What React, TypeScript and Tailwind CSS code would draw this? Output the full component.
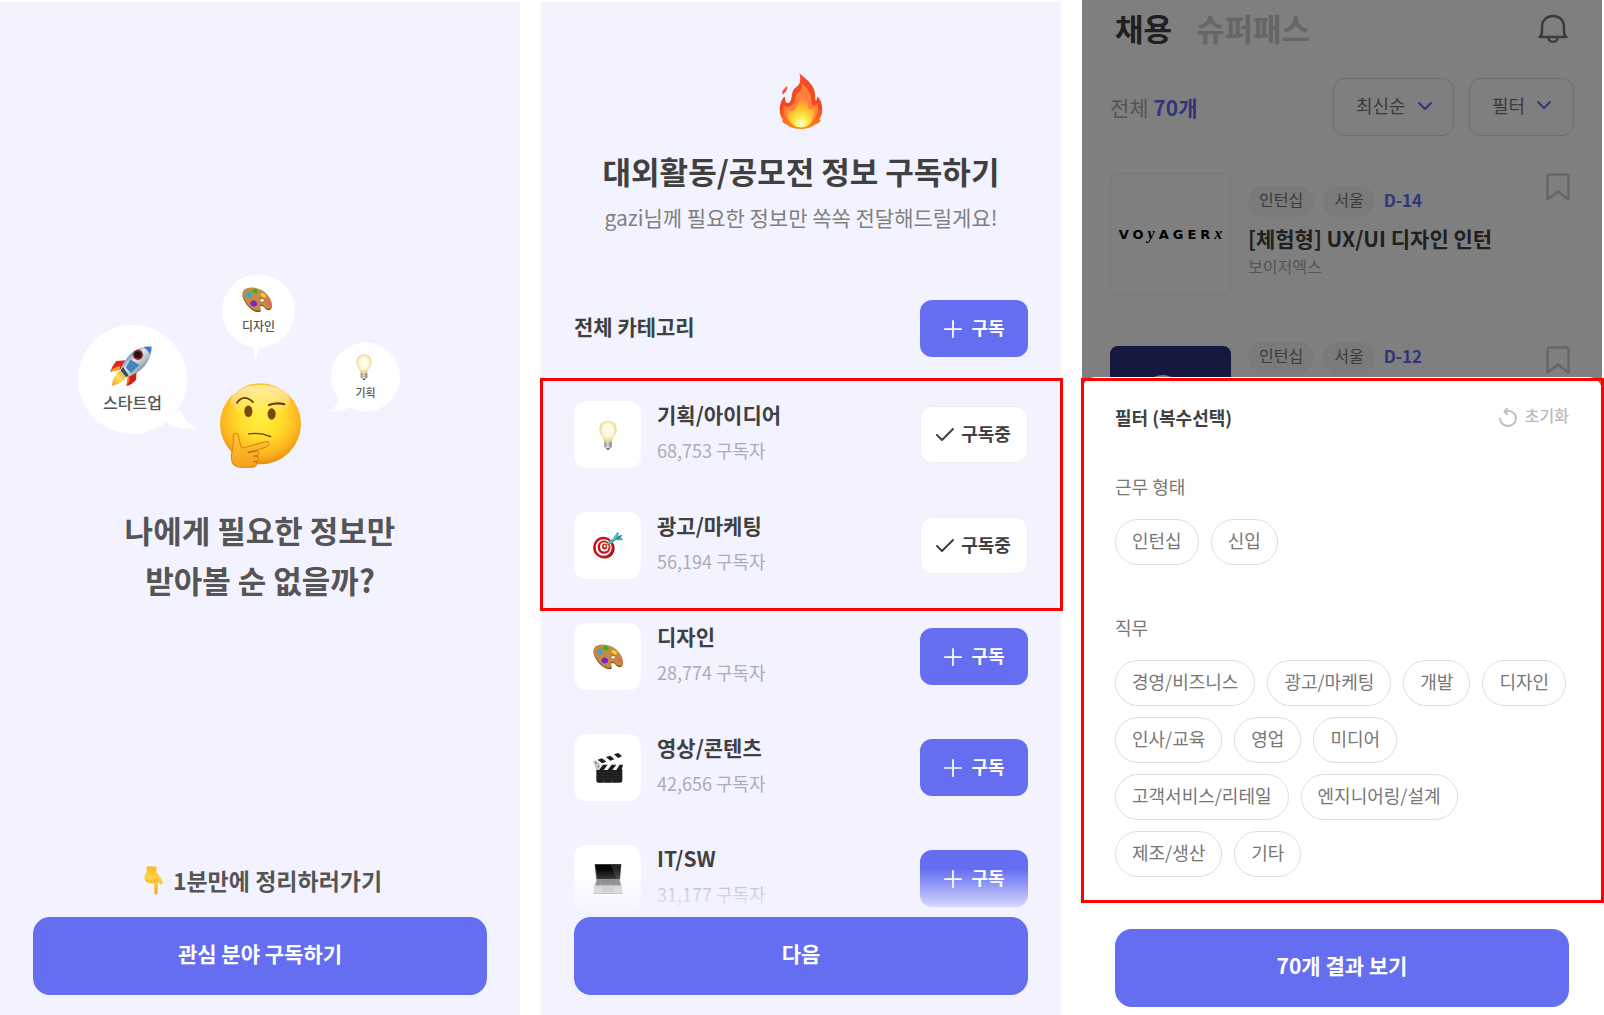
import React from 'react';
import { Check, ChevronDown, Plus } from 'lucide-react';

interface IconProps {
  className?: string;
}

function ThinkingFace({ className }: IconProps) {
  return (
    <svg viewBox="0 0 240 252" className={className} aria-hidden="true">
      <defs>
        <radialGradient id="face" cx="0.5" cy="0.4" r="0.62">
          <stop offset="0" stopColor="#fff23f" />
          <stop offset="0.45" stopColor="#ffdc2c" />
          <stop offset="0.78" stopColor="#fdb41f" />
          <stop offset="1" stopColor="#e38b10" />
        </radialGradient>
        <linearGradient id="faceShine" x1="0" y1="0" x2="0" y2="1">
          <stop offset="0" stopColor="#fff" stopOpacity="0.6" />
          <stop offset="1" stopColor="#fff" stopOpacity="0" />
        </linearGradient>
        <linearGradient id="hand" x1="0" y1="0" x2="0" y2="1">
          <stop offset="0" stopColor="#ffc92f" />
          <stop offset="1" stopColor="#f6a01c" />
        </linearGradient>
      </defs>
      <circle cx="120" cy="121" r="120" fill="url(#face)" />
      <ellipse cx="120" cy="52" rx="88" ry="46" fill="url(#faceShine)" />
      <g fill="none" stroke="#6b3a05" strokeLinecap="round">
        <path d="M50 59Q70 30 98 57" strokeWidth="5" />
        <path d="M145 65Q168 57 191 63" strokeWidth="6" />
        <path d="M85 151Q118 145 150 159" strokeWidth="4" />
      </g>
      <ellipse cx="84" cy="84" rx="12" ry="17" fill="#7a450e" />
      <ellipse cx="153" cy="92" rx="12" ry="17" fill="#7a450e" />
      <path
        d="M39 156C40 147 52 146 55 158L60 182C61 190 66 194 74 191L134 174C147 172 149 184 139 188L108 200C116 204 116 212 110 216C116 222 114 230 109 233C112 242 104 250 92 250H62C40 250 32 236 34 214C36 196 42 186 39 156Z"
        fill="url(#hand)"
        stroke="#d9820f"
        strokeWidth="3"
      />
      <path d="M108 200L84 206M110 216L100 217M109 233L100 233" stroke="#b9660a" strokeWidth="4" strokeLinecap="round" />
    </svg>
  );
}

function Rocket({ className }: IconProps) {
  return (
    <svg viewBox="0 0 123 118" className={className} aria-hidden="true">
      <defs>
        <linearGradient id="hull" x1="0.2" y1="0.2" x2="0.8" y2="0.8">
          <stop offset="0" stopColor="#3f6f9f" />
          <stop offset="0.4" stopColor="#dfe6ea" />
          <stop offset="0.7" stopColor="#aebcc4" />
          <stop offset="1" stopColor="#3a6a9c" />
        </linearGradient>
        <linearGradient id="flame" x1="1" y1="0" x2="0" y2="1">
          <stop offset="0" stopColor="#e98b14" />
          <stop offset="0.5" stopColor="#ffe562" />
          <stop offset="1" stopColor="#f29b1d" />
        </linearGradient>
      </defs>
      <path d="M46 42L18 44Q6 58 0 76L30 70Z" fill="#e0281e" />
      <path d="M0 76Q10 62 30 60L28 71Z" fill="#f7a21d" />
      <path d="M78 76L76 100Q64 114 48 118L54 86Z" fill="#d91c16" />
      <path d="M48 118Q58 106 58 94L52 88Z" fill="#f7781d" />
      <path d="M30 72Q8 86 5 117Q34 112 48 92Z" fill="url(#flame)" />
      <path d="M122 2Q92-2 64 20Q40 42 31 72L48 92Q80 84 102 58Q124 30 122 2Z" fill="url(#hull)" />
      <path d="M122 2Q112 0 98 3Q112 12 118 24Q123 12 122 2Z" fill="#3a7cc4" />
      <path d="M60 40L86 56L62 80L46 64Z" fill="#4285c0" />
      <path d="M31 72L48 92L54 86L38 62Z" fill="#33475a" />
      <circle cx="82" cy="26" r="15" fill="#9c1f22" />
      <circle cx="82" cy="26" r="10" fill="#1c1517" />
    </svg>
  );
}

function Palette({ className }: IconProps) {
  return (
    <svg viewBox="0 0 88 73" className={className} aria-hidden="true">
      <path
        d="M3 16C10 4 36 0 60 14C78 24 90 44 87 60C84 70 76 70 68 63C62 54 54 54 53 60C53 64 58 70 52 73C40 77 20 62 10 46C2 34 0 24 3 16Z"
        fill="#7c4a17"
      />
      <path
        d="M3 12C10 0 36-3 60 10C78 21 90 41 87 56C84 66 76 66 68 60C62 50 54 50 52 56C52 61 57 66 52 69C40 73 20 58 10 42C2 30 0 20 3 12Z"
        fill="#c58a45"
      />
      <ellipse cx="59" cy="39" rx="7" ry="5" fill="#fff" stroke="#7c4a17" strokeWidth="1.5" />
      <path d="M12 18Q18 10 24 18Q32 22 27 29Q20 33 15 27Q10 24 12 18Z" fill="#2fa8dd" />
      <path d="M30 9Q37 2 43 8Q50 13 44 18Q36 21 31 16Z" fill="#37b526" />
      <path d="M55 18Q63 15 68 22Q73 28 67 31Q58 29 55 23Z" fill="#f6cf2b" />
      <path d="M71 38Q79 38 83 46Q86 54 81 54Q73 50 71 44Z" fill="#f0605b" />
      <path d="M26 43Q34 37 41 42Q48 50 42 55Q34 60 27 54Q22 50 26 43Z" fill="#7d22c3" />
    </svg>
  );
}

function Bulb({ className }: IconProps) {
  return (
    <svg viewBox="0 0 48 78" className={className} aria-hidden="true">
      <defs>
        <radialGradient id="glass" cx="0.5" cy="0.45" r="0.58">
          <stop offset="0" stopColor="#fff" />
          <stop offset="0.55" stopColor="#fff6d6" />
          <stop offset="1" stopColor="#e3c368" />
        </radialGradient>
        <linearGradient id="socket" x1="0" y1="0" x2="1" y2="0">
          <stop offset="0" stopColor="#8b8b8b" />
          <stop offset="0.45" stopColor="#ededed" />
          <stop offset="1" stopColor="#7c7c7c" />
        </linearGradient>
      </defs>
      <path d="M24 1C10 1 1 11 1 24C1 38 13 44 14 58H34C35 44 47 38 47 24C47 11 38 1 24 1Z" fill="url(#glass)" />
      <path d="M14 57H34V70Q32 74 28 75H20Q16 74 14 70Z" fill="url(#socket)" />
      <path d="M14 62H34M14 67H34" stroke="#8f8f8f" strokeWidth="1.5" />
      <path d="M19 74H29L26 78H22Z" fill="#3d3d3d" />
    </svg>
  );
}

function PointDown({ className }: IconProps) {
  return (
    <svg viewBox="0 0 55 85" className={className} aria-hidden="true">
      <defs>
        <linearGradient id="finger" x1="0" y1="0" x2="0" y2="1">
          <stop offset="0" stopColor="#f9b62c" />
          <stop offset="0.4" stopColor="#ffd443" />
          <stop offset="1" stopColor="#f5a920" />
        </linearGradient>
      </defs>
      <path
        d="M6 3Q20-2 37 3Q34 14 39 22Q50 32 55 50Q53 57 45 52L40 46V80Q35 88 30 80V50Q24 54 20 50Q13 54 10 47Q3 48 2 40Q-1 28 7 18Q8 10 6 3Z"
        fill="url(#finger)"
      />
      <path d="M30 50V38M20 50V42M10 46V39M40 46Q39 38 34 34" stroke="#d98b14" strokeWidth="1.5" fill="none" />
    </svg>
  );
}

function Fire({ className }: IconProps) {
  return (
    <svg viewBox="0 0 126 166" className={className} aria-hidden="true">
      <defs>
        <linearGradient id="fireOuter" x1="0" y1="0" x2="0" y2="1">
          <stop offset="0" stopColor="#f4502c" />
          <stop offset="0.6" stopColor="#f2461f" />
          <stop offset="1" stopColor="#f98a1e" />
        </linearGradient>
        <radialGradient id="fireInner" cx="0.5" cy="0.88" r="0.75">
          <stop offset="0" stopColor="#fffde0" />
          <stop offset="0.25" stopColor="#fff25a" />
          <stop offset="0.6" stopColor="#ffc32c" />
          <stop offset="1" stopColor="#ff8a33" />
        </radialGradient>
      </defs>
      <path
        d="M58 0C70 14 104 30 105 66C105 82 106 84 109 80C111 76 109 71 112 70C121 78 126 92 126 110C126 124 120 134 116 139L122 138C120 148 112 150 106 152C96 161 80 166 63 166C44 166 28 161 18 151C12 150 8 146 6 140L11 141C4 132 0 124 0 108C0 92 8 74 14 70C18 76 14 90 24 89C36 87 34 70 38 56C42 42 56 42 60 26C62 16 60 8 58 0Z"
        fill="url(#fireOuter)"
      />
      <path
        d="M66 32C86 50 96 62 94 88C94 100 108 98 112 88C118 112 108 136 94 150C84 160 44 160 32 150C16 138 8 116 12 94C18 104 34 102 42 88C48 76 44 68 52 60C62 52 68 48 66 32Z"
        fill="#ff7e3a"
      />
      <path
        d="M66 66C78 80 84 86 84 100C86 112 98 108 104 102C106 124 98 142 86 154C76 164 50 164 40 154C26 144 20 128 24 110C32 116 44 114 48 102C52 90 62 84 66 66Z"
        fill="url(#fireInner)"
      />
      <path d="M8 64C4 50 18 46 21 38C25 48 18 58 8 64Z" fill="#f0533a" />
    </svg>
  );
}

function Target({ className }: IconProps) {
  return (
    <svg viewBox="0 0 90 80" className={className} aria-hidden="true">
      <ellipse cx="36" cy="49" rx="29" ry="30" fill="#7d0d10" />
      <ellipse cx="31" cy="46" rx="31" ry="32" fill="#c9151b" />
      <ellipse cx="32" cy="46" rx="24" ry="25" fill="#fff" />
      <ellipse cx="33" cy="45" rx="19" ry="20" fill="#c9151b" />
      <ellipse cx="34" cy="44" rx="13" ry="14" fill="#fff" />
      <ellipse cx="35" cy="43" rx="8" ry="9" fill="#c9151b" />
      <ellipse cx="36" cy="42" rx="4" ry="4" fill="#fff" />
      <path d="M36 42L46 33" stroke="#a8862a" strokeWidth="4" />
      <path d="M44 32L66 14L72 21L50 38Z" fill="#39a9b5" />
      <path d="M46 34L68 17" stroke="#9adfe4" strokeWidth="2" />
      <path d="M62 16L72 0L78 2L76 12L88 18L90 24L72 24Z" fill="#4ab7c3" />
      <path d="M68 19L84 8L88 11L74 22Z" fill="#267f8c" />
    </svg>
  );
}

function Clapper({ className }: IconProps) {
  return (
    <svg viewBox="0 0 90 93" className={className} aria-hidden="true">
      <path d="M10 52H88V86Q88 92 80 92H16Q10 92 10 86Z" fill="#1d1d1d" />
      <path d="M12 62H86M12 71H86M12 80H86" stroke="#444" strokeWidth="1" />
      <path d="M32 84V90M58 84V90" stroke="#777" strokeWidth="2" />
      <path d="M10 38H90L86 54H10Z" fill="#f4f4f4" />
      <path d="M30 38H44L32 54H18ZM56 38H70L58 54H44ZM80 38H90L86 54H70Z" fill="#1d1d1d" />
      <path d="M0 28L83 1L87 14L6 41Z" fill="#f4f4f4" />
      <path d="M14 23L27 19L40 29L27 34ZM39 15L52 11L64 22L52 26ZM63 7L76 3L87 13L75 18Z" fill="#1d1d1d" />
      <path d="M0 28L10 25L22 38L18 54H10Z" fill="#c5c8ca" />
      <circle cx="9" cy="33" r="2" fill="#333" />
      <circle cx="16" cy="44" r="2" fill="#333" />
    </svg>
  );
}

function Laptop({ className }: IconProps) {
  return (
    <svg viewBox="0 0 88 90" className={className} aria-hidden="true">
      <path d="M4 0H84L80 47H9Z" fill="#3c3c3c" />
      <path d="M7 3H81L77 44H12Z" fill="#050505" />
      <path d="M52 3H81L77 44H70Z" fill="#262626" />
      <path d="M9 47H80L86 68H2Z" fill="#a2a2a5" />
      <path d="M12 49H77L81 63H8Z" fill="#5d5d60" />
      <path d="M11 54H79M9 59H80M24 49L20 63M38 49L36 63M52 49L53 63M66 49L70 63" stroke="#9a9a9d" strokeWidth="1" />
      <path d="M2 68H86L88 86Q88 90 84 90H4Q0 90 0 86Z" fill="#c8c8cc" />
      <path d="M26 68H63L65 84H23Z" fill="#b5b5ba" />
      <path d="M0 86H88Q88 90 84 90H4Q0 90 0 86Z" fill="#98989c" />
    </svg>
  );
}

function Bell({ className }: IconProps) {
  return (
    <svg
      viewBox="0 0 30 30"
      fill="none"
      stroke="currentColor"
      strokeWidth="2.5"
      strokeLinejoin="round"
      strokeLinecap="round"
      className={className}
      aria-hidden="true"
    >
      <path d="M1.500 23H28.500C25.500 21.500 26 18.500 26 13C26 6 21 2 15 2C9 2 4 6 4 13C4 18.500 4.500 21.500 1.500 23Z" />
      <path d="M10.500 24C11 29 19 29 19.500 24" />
    </svg>
  );
}

function BookmarkIcon({ className }: IconProps) {
  return (
    <svg viewBox="0 0 24 28" fill="none" stroke="currentColor" strokeWidth="2.5" strokeLinejoin="round" className={className} aria-hidden="true">
      <path d="M1.500 4Q1.500 1.500 4 1.500H20Q22.500 1.500 22.500 4V26.500L12 18.500L1.500 26.500Z" />
    </svg>
  );
}

function ResetIcon({ className }: IconProps) {
  return (
    <svg viewBox="0 0 18 19" fill="none" stroke="currentColor" strokeWidth="1.8" strokeLinecap="round" className={className} aria-hidden="true">
      <path d="M6 3.500C11.500 1.500 17 5 17 10.300C17 14.500 13.500 18 9 18C4.500 18 1 14.500 1 10.500" />
      <path d="M8 1L5.500 3.500L8 6" />
    </svg>
  );
}

const categories = [
  { name: '기획/아이디어', subscribers: '68,753', icon: Bulb, iconClass: 'h-[30px] w-[18px]', subscribed: true },
  { name: '광고/마케팅', subscribers: '56,194', icon: Target, iconClass: 'h-[27px] w-[30px]', subscribed: true },
  { name: '디자인', subscribers: '28,774', icon: Palette, iconClass: 'h-[25px] w-[30px]', subscribed: false },
  { name: '영상/콘텐츠', subscribers: '42,656', icon: Clapper, iconClass: 'h-[31px] w-[30px]', subscribed: false },
  { name: 'IT/SW', subscribers: '31,177', icon: Laptop, iconClass: 'h-[30px] w-[30px]', subscribed: false },
];

const workTypes = ['인턴십', '신입'];

const jobs = [
  '경영/비즈니스',
  '광고/마케팅',
  '개발',
  '디자인',
  '인사/교육',
  '영업',
  '미디어',
  '고객서비스/리테일',
  '엔지니어링/설계',
  '제조/생산',
  '기타',
];

function PrimaryButton({ children }: { children: React.ReactNode }) {
  return (
    <button type="button" className="h-[78px] w-full rounded-[17px] bg-[#656df1] pb-1 text-[21px] font-bold text-white">
      {children}
    </button>
  );
}

function SubscribeButton({ subscribed = false }: { subscribed?: boolean }) {
  if (subscribed) {
    return (
      <button
        type="button"
        className="flex h-[57px] w-[108px] items-center justify-center gap-1 rounded-xl border border-[#eeeef4] bg-white pr-1 text-[18px] leading-6 font-bold text-[#404040]"
      >
        <Check className="h-6 w-6" strokeWidth={2} />
        <span className="pb-1">구독중</span>
      </button>
    );
  }
  return (
    <button
      type="button"
      className="flex h-[57px] w-[108px] items-center justify-center gap-1 rounded-xl bg-[#656df1] pr-1 text-[18px] leading-6 font-bold text-white"
    >
      <Plus className="h-7 w-7" strokeWidth={1.5} />
      <span className="pb-1">구독</span>
    </button>
  );
}

function CategoryRow({ category }: { category: (typeof categories)[number] }) {
  const Icon = category.icon;
  return (
    <li className="flex h-[67px] items-center">
      <div className="flex h-[67px] w-[67px] items-center justify-center rounded-xl bg-white">
        <Icon className={category.iconClass} />
      </div>
      <div className="ml-4 flex-1 self-start">
        <p className="text-[21px] leading-[26px] font-bold text-[#404040]">{category.name}</p>
        <p className="mt-[11px] text-[18px] leading-6 text-[#acacb2]">{category.subscribers} 구독자</p>
      </div>
      <SubscribeButton subscribed={category.subscribed} />
    </li>
  );
}

function IntroScreen() {
  return (
    <section className="mt-0.5 flex flex-col bg-[#f3f3ff] pt-[258px] pb-5">
      <div className="rounded-[20px] border border-[#f2f2f6] pt-[13px]">
        {/* Thought bubbles around the face */}
        <div className="relative mx-auto h-[194px] w-[364px]">
          <svg viewBox="0 0 364 194" className="absolute inset-0 h-full w-full" fill="#fff" aria-hidden="true">
            <circle cx="54.500" cy="105.500" r="54.500" />
            <path d="M102 136Q107 150 119 154Q101 158 88 148Z" />
            <circle cx="180.500" cy="37" r="36.500" />
            <path d="M174 70L177.500 87L183 70Z" />
            <circle cx="287.500" cy="103" r="34.500" />
            <path d="M261 122Q260 131 253 137Q263 139 273 132Z" />
          </svg>
          <div className="absolute top-[72px] left-0 flex w-[109px] flex-col items-center">
            <Rocket className="mr-1 h-[40px] w-[42px]" />
            <span className="mt-1 text-[16px] leading-6 font-medium text-[#555]">스타트업</span>
          </div>
          <div className="absolute top-[13px] left-[144px] flex w-[73px] flex-col items-center">
            <Palette className="mr-1 h-[25px] w-[30px]" />
            <span className="mt-1 text-[12px] leading-5 font-medium text-[#555]">디자인</span>
          </div>
          <div className="absolute top-[80px] left-[253px] flex w-[69px] flex-col items-center">
            <Bulb className="mr-1 h-[26px] w-4" />
            <span className="mt-0.5 text-[11px] leading-5 font-medium text-[#555]">기획</span>
          </div>
          <ThinkingFace className="absolute top-[109px] left-[142px] h-[85px] w-[81px]" />
        </div>
        <h1 className="mt-[37px] text-center text-[31px] leading-[50px] font-bold text-[#555]">
          나에게 필요한 정보만
          <br />
          받아볼 순 없을까?
        </h1>
      </div>
      <div className="mt-auto px-[33px]">
        <p className="mb-[21px] flex items-center justify-center gap-2.5 pl-1.5 text-[23px] leading-8 font-bold text-[#555]">
          <PointDown className="h-[29px] w-[19px]" />
          1분만에 정리하러가기
        </p>
        <PrimaryButton>관심 분야 구독하기</PrimaryButton>
      </div>
    </section>
  );
}

function SubscribeScreen() {
  return (
    <section className="mt-0.5 flex flex-col bg-[#f3f3ff] pt-[71px] pb-5">
      <header className="flex flex-col items-center">
        <Fire className="h-[56px] w-[44px]" />
        <h1 className="mt-5 text-[31px] leading-[44px] font-bold text-[#404040]">대외활동/공모전 정보 구독하기</h1>
        <p className="mt-2 text-[21px] leading-8 text-[#808080]">gazi님께 필요한 정보만 쏙쏙 전달해드릴게요!</p>
      </header>
      <div className="mt-[67px] flex items-center justify-between px-[33px]">
        <h2 className="pb-1.5 text-[21px] leading-8 font-bold text-[#404040]">전체 카테고리</h2>
        <SubscribeButton />
      </div>
      <div className="relative mt-[21px] px-[33px] pt-[23px] pb-8">
        <ul className="flex flex-col gap-11">
          {categories.slice(0, 2).map((category) => (
            <CategoryRow key={category.name} category={category} />
          ))}
        </ul>
        <div className="pointer-events-none absolute inset-y-0 -right-0.5 -left-px border-[3px] border-[#ff0000]" />
      </div>
      <ul className="mt-3 flex flex-col gap-11 px-[33px]">
        {categories.slice(2).map((category) => (
          <CategoryRow key={category.name} category={category} />
        ))}
      </ul>
      <div className="relative mt-auto px-[33px]">
        <div className="pointer-events-none absolute inset-x-0 bottom-full h-12 bg-linear-to-t from-[#f3f3ff] to-[#f3f3ff]/0" />
        <PrimaryButton>다음</PrimaryButton>
      </div>
    </section>
  );
}

function JobTags({ dday }: { dday: string }) {
  return (
    <div className="flex items-center gap-[9px] text-[16px] leading-[27px]">
      <span className="rounded-full bg-[#f4f4f4] px-[11px] pb-1 text-[#777]">인턴십</span>
      <span className="rounded-full bg-[#f4f4f4] px-[11px] pb-1 text-[#777]">서울</span>
      <span className="pb-1 text-[17px] font-bold text-[#656df1]">{dday}</span>
    </div>
  );
}

function FilterChips({ title, options }: { title: string; options: string[] }) {
  return (
    <div>
      <h3 className="pb-0.5 text-[18px] leading-6 text-[#777]">{title}</h3>
      <div className="mt-[19px] flex flex-wrap gap-x-3 gap-y-[11px]">
        {options.map((option) => (
          <button
            key={option}
            type="button"
            className="h-[46px] rounded-full border border-[#dedede] px-4 pb-1 text-[18px] leading-6 text-[#777]"
          >
            {option}
          </button>
        ))}
      </div>
    </div>
  );
}

function FilterScreen() {
  return (
    <section className="flex flex-col bg-[#808080]">
      {/* Job list behind the sheet */}
      <div className="relative h-[377px] overflow-hidden bg-white">
        <div className="flex h-[58px] items-center pr-[34px] pl-[33px]">
          <nav className="flex gap-6 pb-0.5 text-[31px] leading-[44px] font-bold">
            <button type="button" className="text-[#404040]">채용</button>
            <button type="button" className="text-[#ccc]">슈퍼패스</button>
          </nav>
          <button type="button" aria-label="알림" className="ml-auto text-[#777]">
            <Bell className="h-[30px] w-[30px]" />
          </button>
        </div>

        <div className="mt-5 flex items-center pr-7 pl-7">
          <p className="flex-1 text-[21px] leading-8 text-[#aaa]">
            전체 <span className="font-bold text-[#656df1]">70개</span>
          </p>
          <div className="relative">
            <select
              aria-label="정렬"
              className="h-[58px] w-[121px] appearance-none rounded-xl border border-[#dedede] bg-transparent pb-1 pl-[22px] text-[18px] text-[#777]"
            >
              <option>최신순</option>
            </select>
            <ChevronDown className="pointer-events-none absolute top-4 right-[17px] h-6 w-6 text-[#656df1]" />
          </div>
          <button
            type="button"
            className="ml-[15px] flex h-[58px] w-[105px] items-center justify-between rounded-xl border border-[#dedede] pr-[17px] pb-1 pl-[22px] text-[18px] text-[#777]"
          >
            필터
            <ChevronDown className="h-6 w-6 text-[#656df1]" />
          </button>
        </div>

        <ul className="mt-[37px] pr-8 pl-7">
          <li className="flex items-center">
            <div className="flex h-[122px] w-[121px] items-center justify-center rounded-lg border border-[#eee] pl-1 font-['DejaVu_Sans'] text-[13px] leading-none font-bold tracking-[4px] text-black">
              <span>
                VO<i className="font-['Liberation_Serif'] text-[16px]">y</i>AGER
                <i className="font-['Liberation_Serif'] text-[16px]">x</i>
              </span>
            </div>
            <div className="ml-[17px] flex-1 pb-1">
              <JobTags dday="D-14" />
              <h3 className="mt-[5px] text-[21px] leading-8 font-bold text-[#404040]">[체험형] UX/UI 디자인 인턴</h3>
              <p className="text-[16px] leading-6 text-[#aaa]">보이저엑스</p>
            </div>
            <button type="button" aria-label="저장" className="self-start text-[#ccc]">
              <BookmarkIcon className="h-7 w-6" />
            </button>
          </li>
          <li className="mt-[47px] flex">
            <div className="mt-1 h-[122px] w-[121px] overflow-hidden rounded-lg bg-[#2a307f]">
              <svg viewBox="0 0 121 122" className="h-full w-full" aria-hidden="true">
                <path d="M40 34Q44 29 54 29Q68 30 71 48L40 60Z" fill="#fff" />
              </svg>
            </div>
            <div className="ml-[17px] flex-1">
              <JobTags dday="D-12" />
            </div>
            <button type="button" aria-label="저장" className="mt-1 self-start text-[#ccc]">
              <BookmarkIcon className="h-7 w-6" />
            </button>
          </li>
        </ul>
        <div className="absolute inset-0 bg-black/50" />
      </div>

      {/* Filter sheet */}
      <div className="flex flex-1 flex-col rounded-t-[14px] bg-white pb-2">
        <div className="relative mt-px px-[33px] pt-[25px] pb-[26px]">
          <div className="flex items-center justify-between">
            <h2 className="text-[18px] leading-7 font-bold text-[#404040]">필터 (복수선택)</h2>
            <button type="button" className="flex items-center gap-2 text-[16px] leading-6 font-medium text-[#bbb]">
              <ResetIcon className="h-[19px] w-[18px]" />
              <span className="pb-1">초기화</span>
            </button>
          </div>
          <div className="mt-[43px] flex flex-col gap-[50px]">
            <FilterChips title="근무 형태" options={workTypes} />
            <FilterChips title="직무" options={jobs} />
          </div>
          <div className="pointer-events-none absolute inset-y-0 -right-0.5 -left-px border-[3px] border-[#ff0000]" />
        </div>
        <div className="mt-auto px-[33px]">
          <PrimaryButton>70개 결과 보기</PrimaryButton>
        </div>
      </div>
    </section>
  );
}

export default function App() {
  return (
    <main className="grid min-h-screen grid-cols-3 gap-x-[21px] bg-white pr-0.5 font-['Noto_Sans_CJK_KR','Noto_Sans',sans-serif]">
      <IntroScreen />
      <SubscribeScreen />
      <FilterScreen />
    </main>
  );
}
